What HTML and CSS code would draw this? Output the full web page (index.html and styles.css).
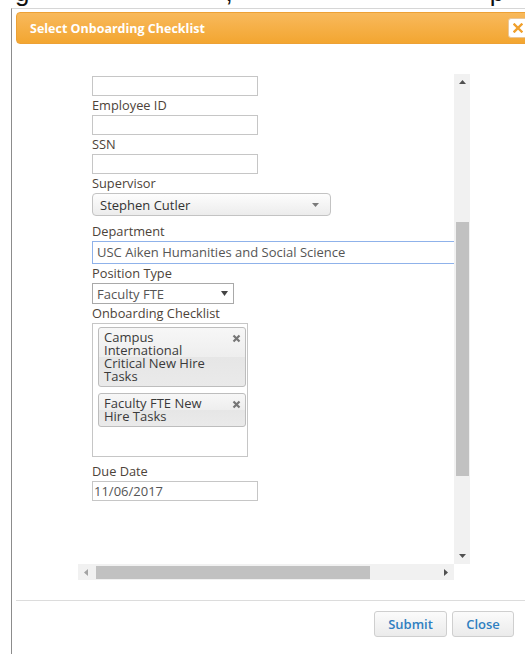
FILE: index.html
```html
<!DOCTYPE html>
<html lang="en">
<head>
<meta charset="utf-8">
<title>Select Onboarding Checklist</title>
<link rel="stylesheet" href="styles.css">
</head>
<body>
<div class="page-strip"><div class="page-strip-text"><span class="s-g">g</span><span class="s-comma">,</span><span class="s-p">p</span></div></div>

<div class="window">
  <div class="titlebar">
    <span class="title">Select Onboarding Checklist</span>
    <button class="close" type="button" aria-label="Close">
      <svg width="10" height="10" viewBox="0 0 10 10"><path d="M1.5 1.5 L8.5 8.5 M8.5 1.5 L1.5 8.5" stroke="#f0a02c" stroke-width="2.4" stroke-linecap="square"/></svg>
    </button>
  </div>

  <div class="body">
    <div class="frame">
      <div class="viewport">
        <div class="form">
          <div class="field"></div>
          <div class="label">Employee ID</div>
          <div class="field"></div>
          <div class="label">SSN</div>
          <div class="field"></div>
          <div class="label">Supervisor</div>
          <div class="dropdown rounded">
            <span>Stephen Cutler</span>
            <svg class="caret" width="7" height="4" viewBox="0 0 7 4"><path d="M0 0 H7 L3.5 4 Z" fill="#7a7a7a"/></svg>
          </div>
          <div class="label">Department</div>
          <div class="field wide">USC Aiken Humanities and Social Science</div>
          <div class="label">Position Type</div>
          <div class="dropdown plain">
            <span>Faculty FTE</span>
            <svg class="caret" width="7" height="5" viewBox="0 0 7 5"><path d="M0 0 H7 L3.5 5 Z" fill="#444"/></svg>
          </div>
          <div class="label">Onboarding Checklist</div>
          <div class="multiselect">
            <div class="tag">
              <span class="tag-text">Campus International Critical New Hire Tasks</span>
              <svg class="tag-x" width="9" height="9" viewBox="0 0 9 9"><path d="M1.5 1.5 L7.5 7.5 M7.5 1.5 L1.5 7.5" stroke="#777" stroke-width="2.2"/></svg>
            </div>
            <div class="tag">
              <span class="tag-text">Faculty FTE New Hire Tasks</span>
              <svg class="tag-x" width="9" height="9" viewBox="0 0 9 9"><path d="M1.5 1.5 L7.5 7.5 M7.5 1.5 L1.5 7.5" stroke="#777" stroke-width="2.2"/></svg>
            </div>
          </div>
          <div class="label">Due Date</div>
          <div class="field date">11/06/2017</div>
        </div>
      </div>

      <div class="vbar">
        <div class="sb-arrow"><svg width="7" height="4" viewBox="0 0 7 4"><path d="M0 4 H7 L3.5 0 Z" fill="#505050"/></svg></div>
        <div class="vthumb"></div>
        <div class="sb-fill"></div>
        <div class="sb-arrow"><svg width="7" height="4" viewBox="0 0 7 4"><path d="M0 0 H7 L3.5 4 Z" fill="#505050"/></svg></div>
      </div>

      <div class="hbar">
        <div class="sb-arrow"><svg width="4" height="7" viewBox="0 0 4 7"><path d="M4 0 V7 L0 3.5 Z" fill="#a3a3a3"/></svg></div>
        <div class="hthumb"></div>
        <div class="sb-fill"></div>
        <div class="sb-arrow"><svg width="4" height="7" viewBox="0 0 4 7"><path d="M0 0 V7 L4 3.5 Z" fill="#505050"/></svg></div>
      </div>

      <div class="corner"></div>
    </div>
  </div>

  <div class="footer">
    <button class="btn btn-submit" type="button">Submit</button>
    <button class="btn btn-close" type="button">Close</button>
  </div>
</div>
</body>
</html>
```

FILE: styles.css
```css
html, body {
  margin: 0;
  padding: 0;
}

body {
  width: 525px;
  height: 654px;
  overflow: hidden;
  background: #fff;
  font-family: "Open Sans", "Noto Sans", sans-serif;
}

/* strip of the page behind the dialog */
.page-strip {
  height: 8px;
  overflow: hidden;
}

.page-strip-text {
  margin-top: -21px;
  font: 26px/26px "Liberation Sans", sans-serif;
  color: #111;
  white-space: nowrap;
}

.s-g { margin-left: 15px; }
.s-comma { margin-left: 196px; }
.s-p { margin-left: 257px; }

/* dialog window */
.window {
  margin-left: 11px;
  height: 646px;
  box-sizing: border-box;
  border-left: 1px solid #8c8c8c;
  border-top: 1px solid #d6d6d6;
  padding: 3px 0 0 4px;
}

.titlebar {
  width: 530px;
  height: 32px;
  box-sizing: border-box;
  border: 1px solid #eda136;
  border-radius: 4px;
  background: linear-gradient(#f8b95c, #f3a631);
  display: flex;
  align-items: center;
  justify-content: space-between;
  padding: 0 17px 0 13px;
}

.title {
  color: #fff;
  font-size: 12.5px;
  font-weight: 700;
}

.close {
  width: 20px;
  height: 20px;
  padding: 0;
  border: 1px solid #eac79a;
  border-radius: 3px;
  background: #fff;
  display: flex;
  align-items: center;
  justify-content: center;
}

.body {
  padding: 30px 0 0 62px;
}

/* scrollable frame with classic scrollbars */
.frame {
  display: grid;
  grid-template-columns: 376px 16px;
  grid-template-rows: 490px 16px;
}

.viewport {
  overflow: hidden;
  padding: 2px 0 0 14px;
}

.form {
  display: flex;
  flex-direction: column;
  align-items: flex-start;
  font-size: 12.8px;
  color: #4d4339;
}

.label {
  line-height: 19px;
  height: 19px;
  white-space: nowrap;
}

.field {
  width: 166px;
  height: 20px;
  box-sizing: border-box;
  border: 1px solid #c6c6c6;
  font-size: 13px;
  line-height: 18px;
  padding-left: 3px;
  color: #555;
  white-space: nowrap;
}

.field.wide {
  width: 390px;
  height: 23px;
  line-height: 21px;
  border-color: #8fb2ea;
  padding-left: 4px;
}

.field.date {
  padding-left: 1px;
}

.dropdown {
  box-sizing: border-box;
  display: flex;
  align-items: center;
  justify-content: space-between;
  font-size: 13px;
  white-space: nowrap;
}

.dropdown.rounded {
  width: 239px;
  height: 23px;
  border: 1px solid #c3c3c3;
  border-radius: 4px;
  background: linear-gradient(#fdfdfd, #ececec);
  padding: 0 11px 0 7px;
  margin-bottom: 6px;
  color: #333;
}

.dropdown.plain {
  width: 142px;
  height: 21px;
  border: 1px solid #a9a9a9;
  background: #fff;
  padding: 0 5px 0 4px;
  color: #555;
}

.multiselect {
  width: 156px;
  height: 134px;
  box-sizing: border-box;
  border: 1px solid #c6c6c6;
  padding: 3px 0 0 5px;
  display: flex;
  flex-direction: column;
  align-items: flex-start;
  gap: 6px;
  margin-bottom: 5px;
}

.tag {
  width: 148px;
  box-sizing: border-box;
  border: 1px solid #bdbdbd;
  border-radius: 3px;
  background: linear-gradient(#f7f7f7, #eeeeee 50%, #e6e6e6 50%, #eaeaea);
  padding: 3px 4px 3px 5px;
  display: flex;
  justify-content: space-between;
  align-items: flex-start;
  font-size: 13px;
  line-height: 13px;
  color: #3a3a3a;
}

.tag-text {
  width: 114px;
}

.tag-x {
  margin-top: 3px;
}

/* scrollbars */
.vbar {
  background: #f1f1f1;
  display: flex;
  flex-direction: column;
}

.hbar {
  background: #f1f1f1;
  display: flex;
}

.sb-arrow {
  width: 16px;
  height: 16px;
  flex: none;
  display: flex;
  align-items: center;
  justify-content: center;
}

.sb-fill {
  flex: 1;
}

.vthumb {
  margin: 132px 1px 0 2px;
  height: 254px;
  background: #c1c1c1;
}

.hthumb {
  margin: 2px 0 1px 2px;
  width: 274px;
  background: #c1c1c1;
}

.corner {
  background: #fff;
}

/* footer buttons */
.footer {
  margin-top: 20px;
  border-top: 1px solid #dcdcdc;
  padding: 10px 11px 0 0;
  display: flex;
  justify-content: flex-end;
  gap: 5px;
}

.btn {
  height: 26px;
  box-sizing: border-box;
  border: 1px solid #cfcfcf;
  border-radius: 3px;
  background: linear-gradient(#fbfbfb, #ebebeb);
  color: #2f7fc1;
  font-family: "Open Sans", "Noto Sans", sans-serif;
  font-size: 13px;
  font-weight: 600;
  padding: 0;
}

.btn-submit { width: 73px; }
.btn-close { width: 62px; }
```
